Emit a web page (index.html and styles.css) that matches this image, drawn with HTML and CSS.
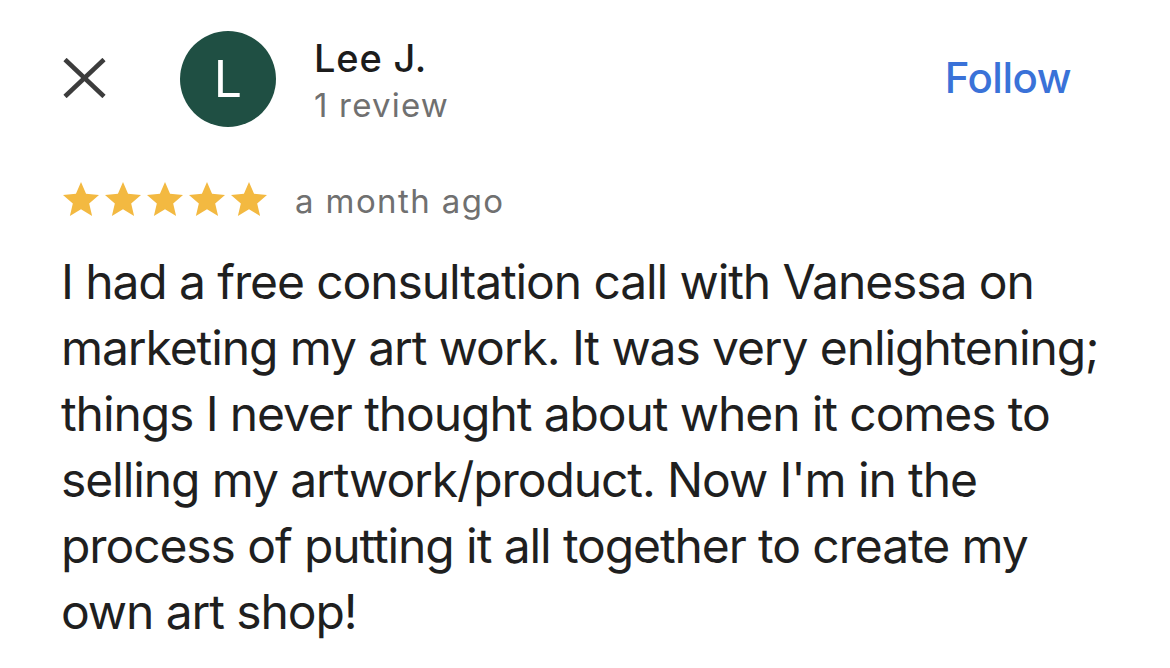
FILE: index.html
```html
<!DOCTYPE html>
<html lang="en">
<head>
<meta charset="utf-8">
<title>Review</title>
<link rel="stylesheet" href="styles.css">
</head>
<body>
<div class="review">
  <div class="header">
    <svg class="close" width="43" height="40" viewBox="0 0 43 40" aria-label="Close">
      <line x1="2" y1="1.5" x2="41" y2="38.5" stroke="#3c3c3c" stroke-width="4.6" />
      <line x1="41" y1="1.5" x2="2" y2="38.5" stroke="#3c3c3c" stroke-width="4.6" />
    </svg>
    <div class="avatar">L</div>
    <div class="who">
      <div class="name">Lee J.</div>
      <div class="count">1 review</div>
    </div>
    <div class="follow">Follow</div>
  </div>
  <div class="meta">
    <div class="stars">
      <svg class="star" viewBox="2 2 20 19" preserveAspectRatio="none"><path d="M12 17.27L18.18 21l-1.64-7.03L22 9.24l-7.19-.61L12 2 9.19 8.63 2 9.24l5.46 4.73L5.82 21z"/></svg>
      <svg class="star" viewBox="2 2 20 19" preserveAspectRatio="none"><path d="M12 17.27L18.18 21l-1.64-7.03L22 9.24l-7.19-.61L12 2 9.19 8.63 2 9.24l5.46 4.73L5.82 21z"/></svg>
      <svg class="star" viewBox="2 2 20 19" preserveAspectRatio="none"><path d="M12 17.27L18.18 21l-1.64-7.03L22 9.24l-7.19-.61L12 2 9.19 8.63 2 9.24l5.46 4.73L5.82 21z"/></svg>
      <svg class="star" viewBox="2 2 20 19" preserveAspectRatio="none"><path d="M12 17.27L18.18 21l-1.64-7.03L22 9.24l-7.19-.61L12 2 9.19 8.63 2 9.24l5.46 4.73L5.82 21z"/></svg>
      <svg class="star" viewBox="2 2 20 19" preserveAspectRatio="none"><path d="M12 17.27L18.18 21l-1.64-7.03L22 9.24l-7.19-.61L12 2 9.19 8.63 2 9.24l5.46 4.73L5.82 21z"/></svg>
    </div>
    <div class="date">a month ago</div>
  </div>
  <p class="text">I had a free consultation call with Vanessa on<br>marketing my art work. It was very enlightening;<br>things I never thought about when it comes to<br>selling my artwork/product. Now I'm in the<br>process of putting it all together to create my<br>own art shop!</p>
</div>
</body>
</html>
```
FILE: styles.css
```css
html, body {
  margin: 0;
  padding: 0;
  background: #ffffff;
}
body {
  font-family: Inter, "Liberation Sans", sans-serif;
  color: #1f1f1f;
  overflow: hidden;
}
.review {
  padding: 31px 99px 0 63px;
}
.header {
  display: flex;
  align-items: flex-start;
  height: 96px;
}
.close {
  display: block;
  margin-top: 27px;
  margin-right: 74px;
  flex: none;
}
.avatar {
  width: 96px;
  height: 96px;
  border-radius: 50%;
  background: #1f4f43;
  color: #ffffff;
  font-size: 50px;
  font-weight: 400;
  display: flex;
  align-items: center;
  justify-content: center;
  margin-right: 38px;
  flex: none;
}
.who {
  display: flex;
  flex-direction: column;
  margin-top: 4px;
}
.name {
  font-size: 38px;
  line-height: 46px;
  font-weight: 500;
  letter-spacing: 0.8px;
  color: #1c1c1c;
}
.count {
  font-size: 33px;
  line-height: 44px;
  margin-top: 2px;
  letter-spacing: 1.2px;
  color: #707070;
}
.follow {
  margin-left: auto;
  margin-top: 22px;
  font-size: 42px;
  line-height: 50px;
  font-weight: 500;
  letter-spacing: -0.5px;
  color: #3a72d8;
}
.meta {
  display: flex;
  align-items: flex-start;
  margin-top: 55px;
}
.stars {
  display: flex;
  gap: 6px;
}
.star {
  display: block;
  width: 36px;
  height: 34px;
  fill: #f3b941;
}
.date {
  margin-left: 28px;
  margin-top: 1px;
  font-size: 33px;
  line-height: 36px;
  letter-spacing: 1.4px;
  color: #707070;
}
.text {
  margin: 30px 0 0 -2px;
  font-size: 48px;
  line-height: 66px;
  letter-spacing: -1.1px;
  color: #1f1f1f;
  white-space: nowrap;
}
```
